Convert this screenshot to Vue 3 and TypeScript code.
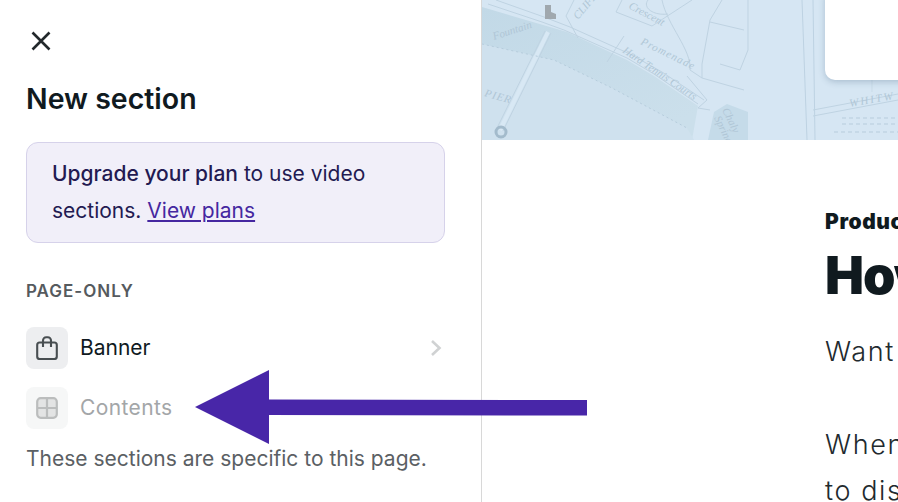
<template>
  <div class="screen">
    <!-- Left panel -->
    <aside class="panel">
      <button class="close" aria-label="Close">
        <svg width="24" height="24" viewBox="0 0 24 24">
          <path d="M3.5 3.5l17 17M20.5 3.5l-17 17" fill="none" stroke="#22282b" stroke-width="2.6" />
        </svg>
      </button>
      <h1>New section</h1>

      <div class="notice">
        <strong>Upgrade your plan</strong> to use video sections.
        <a href="#">View plans</a>
      </div>

      <h2>PAGE-ONLY</h2>

      <div class="rows">
        <div v-for="row in rows" :key="row.label" class="row" :class="{ disabled: row.disabled }">
          <span class="tile">
            <svg v-if="row.icon === 'bag'" width="24" height="24" viewBox="0 0 24 24" fill="none" stroke="#484e51" stroke-width="2.1">
              <rect x="2.2" y="6.5" width="19.6" height="16.5" rx="2.5" />
              <path d="M8 11V4.5a3.2 3.2 0 0 1 3.2-3.2h1.6A3.2 3.2 0 0 1 16 4.5V11" />
            </svg>
            <svg v-else width="24" height="24" viewBox="0 0 24 24" fill="#e3e4e4" stroke="#bbbdbd" stroke-width="2.2">
              <rect x="2.2" y="2.2" width="19.6" height="19.6" rx="3.5" />
              <path d="M12 2.2v19.6M2.2 12h19.6" />
            </svg>
          </span>
          <span class="label">{{ row.label }}</span>
          <svg v-if="!row.disabled" class="chevron" width="14" height="20" viewBox="0 0 14 20">
            <path d="M3 3l7.5 7L3 17" fill="none" stroke="#d0d2d3" stroke-width="2.6" />
          </svg>
        </div>
      </div>

      <p class="hint">These sections are specific to this page.</p>
    </aside>

    <!-- Page preview -->
    <main class="preview">
      <div class="hero">
        <svg class="map" width="416" height="140" viewBox="0 0 416 140">
          <defs>
            <linearGradient id="sea" x1="0" y1="0" x2="0.7" y2="1">
              <stop offset="0" stop-color="#c2d9e7" />
              <stop offset="1" stop-color="#cbdfeb" />
            </linearGradient>
          </defs>
          <rect width="416" height="140" fill="#d6e6f3" />
          <path d="M0 7L85 32L145 60L172 76L216 106L210 140H0Z" fill="url(#sea)" />
          <path d="M0 44L72 60L130 88L205 128L212 140H0Z" fill="#cfe1ee" />
          <path d="M232 112L245 104L266 112V140H226Z" fill="#c5dbe9" />
          <rect x="266" width="54" height="140" fill="#d6e6f3" />
          <g fill="none" stroke="#bfd3e2" stroke-width="1">
            <path d="M6 4L60 22L82 30L145 58L172 74L216 104" />
            <path d="M14 0L62 17L88 27L148 54L180 72L222 100" />
            <path d="M66 32L18 130" stroke="#d8e8f4" stroke-width="4" />
            <path d="M63 31L15 128M69 33L21 131" />
            <circle cx="19" cy="132" r="5" stroke="#a3bbcc" stroke-width="3" />
            <path d="M0 44L72 60L130 88L205 128" stroke="#b6ccdc" stroke-dasharray="2 3" />
            <path d="M92 0L84 16L96 38M140 0L134 12L170 26L210 0M142 36L125 62" />
            <path d="M180 0C185 25 210 50 208 70L220 78V64L228 20L240 0" />
            <path d="M228 22L262 30M220 78L262 90M238 64L258 70L266 50V0" />
            <path d="M205 76L225 100L216 108L228 110M166 0C160 8 172 16 186 14" />
            <path d="M320 0L325 140M331 0L333 140" stroke="#bdd2e2" />
            <path d="M331 116L416 100M331 110L416 94" />
            <path d="M390 40V92" stroke="#c9dbe8" />
            <path d="M360 118H416M360 124H416M352 132H416" stroke="#b7ccdc" stroke-dasharray="4 3" />
          </g>
          <path d="M63 5h6v7l5 2v5h-11z" fill="#a0a8ae" />
          <g class="map-text">
            <text x="12" y="40" transform="rotate(-18 12 40)">Fountain</text>
            <text x="2" y="96" transform="rotate(16 2 96)" letter-spacing="1">PIER</text>
            <text x="96" y="20" transform="rotate(-50 96 20)">CLIFF</text>
            <text x="146" y="8" transform="rotate(28 146 8)">Crescent</text>
            <text x="158" y="44" transform="rotate(26 158 44)" letter-spacing="1">Promenade</text>
            <text x="140" y="52" transform="rotate(34 140 52)">Hard Tennis Courts</text>
            <text x="240" y="110" transform="rotate(64 240 110)">Chaly</text>
            <text x="232" y="118" transform="rotate(64 232 118)">Spring</text>
            <text x="368" y="107" transform="rotate(-10 368 107)" letter-spacing="2">WHITW</text>
          </g>
        </svg>
        <div class="card"></div>
      </div>

      <article class="post">
        <div class="eyebrow">Product updates</div>
        <div class="title">How to use sections</div>
        <p class="intro">Want to add a new section to your page?</p>
        <p class="body">When you add a section, you can choose<br />to display it on just this one page.</p>
      </article>
    </main>

    <!-- Annotation arrow -->
    <svg class="arrow" width="392" height="74" viewBox="0 0 392 74">
      <path d="M0 37L74 0V29.5L392 30V45.5L74 45V74Z" fill="#4826a8" />
    </svg>
  </div>
</template>

<script setup lang="ts">
interface SectionRow {
  label: string
  icon: 'bag' | 'grid'
  disabled: boolean
}

const rows: SectionRow[] = [
  { label: 'Banner', icon: 'bag', disabled: false },
  { label: 'Contents', icon: 'grid', disabled: true },
]
</script>

<style scoped>
.screen {
  position: relative;
  display: flex;
  width: 898px;
  height: 502px;
  overflow: hidden;
  background: #fff;
  font-family: Inter, 'Liberation Sans', sans-serif;
  color: #101a1f;
}

.panel {
  flex: 0 0 482px;
  box-sizing: border-box;
  padding: 29px 36px 0 26px;
  border-right: 1px solid #d8d8d8;
}

.close {
  display: block;
  width: 24px;
  height: 24px;
  margin-left: 3px;
  padding: 0;
  border: 0;
  background: none;
}

h1 {
  margin: 28px 0 0;
  font-size: 28.5px;
  line-height: 36px;
  font-weight: 600;
  color: #101a1f;
}

.notice {
  box-sizing: border-box;
  height: 101px;
  margin-top: 25px;
  padding: 12px 25px;
  border: 1px solid #d6d2ea;
  border-radius: 12px;
  background: #f1eff9;
  font-size: 21px;
  line-height: 37px;
  color: #231a52;
}

.notice strong {
  font-weight: 500;
}

.notice a {
  color: #4527a0;
}

h2 {
  margin: 37px 0 0;
  font-size: 17px;
  line-height: 22px;
  font-weight: 600;
  letter-spacing: 1px;
  color: #555a5e;
}

.rows {
  display: flex;
  flex-direction: column;
  gap: 18px;
  margin-top: 25px;
}

.row {
  display: flex;
  align-items: center;
  gap: 12px;
  height: 42px;
}

.tile {
  display: flex;
  align-items: center;
  justify-content: center;
  width: 42px;
  height: 42px;
  border-radius: 8px;
  background: #edeef0;
}

.label {
  flex: 1;
  font-size: 21px;
  line-height: 28px;
  color: #101a1f;
}

.chevron {
  margin-right: 2px;
}

.row.disabled .tile {
  background: #f6f7f7;
}

.row.disabled .label {
  color: #a3a6a8;
  letter-spacing: 0.4px;
}

.hint {
  margin: 15px 0 0;
  font-size: 21px;
  line-height: 30px;
  color: #5b6064;
}

.preview {
  flex: 1;
  min-width: 0;
}

.hero {
  position: relative;
  height: 140px;
  overflow: hidden;
}

.map {
  display: block;
}

.map-text {
  font-family: 'Liberation Serif', serif;
  font-size: 11px;
  font-style: italic;
  fill: #b0c6d6;
}

.card {
  position: absolute;
  top: -12px;
  left: 343px;
  width: 120px;
  height: 92px;
  border-radius: 10px;
  background: #fff;
  box-shadow: 0 2px 6px rgba(70, 100, 130, 0.3);
}

.post {
  padding: 67px 0 0 343px;
  width: 700px;
  white-space: nowrap;
}

.eyebrow {
  font-size: 21px;
  line-height: 30px;
  font-weight: 900;
  letter-spacing: 0.6px;
}

.title {
  margin-top: 9px;
  font-size: 52px;
  line-height: 60px;
  font-weight: 900;
  letter-spacing: -1px;
}

.intro,
.body {
  font-size: 27px;
  line-height: 46px;
  font-weight: 300;
  letter-spacing: 1.6px;
  color: #222a2e;
}

.intro {
  margin: 23px 0 0;
}

.body {
  margin: 47px 0 0;
}

.arrow {
  position: absolute;
  top: 370px;
  left: 195px;
}
</style>

<style>
html,
body {
  margin: 0;
  overflow: hidden;
}
</style>
